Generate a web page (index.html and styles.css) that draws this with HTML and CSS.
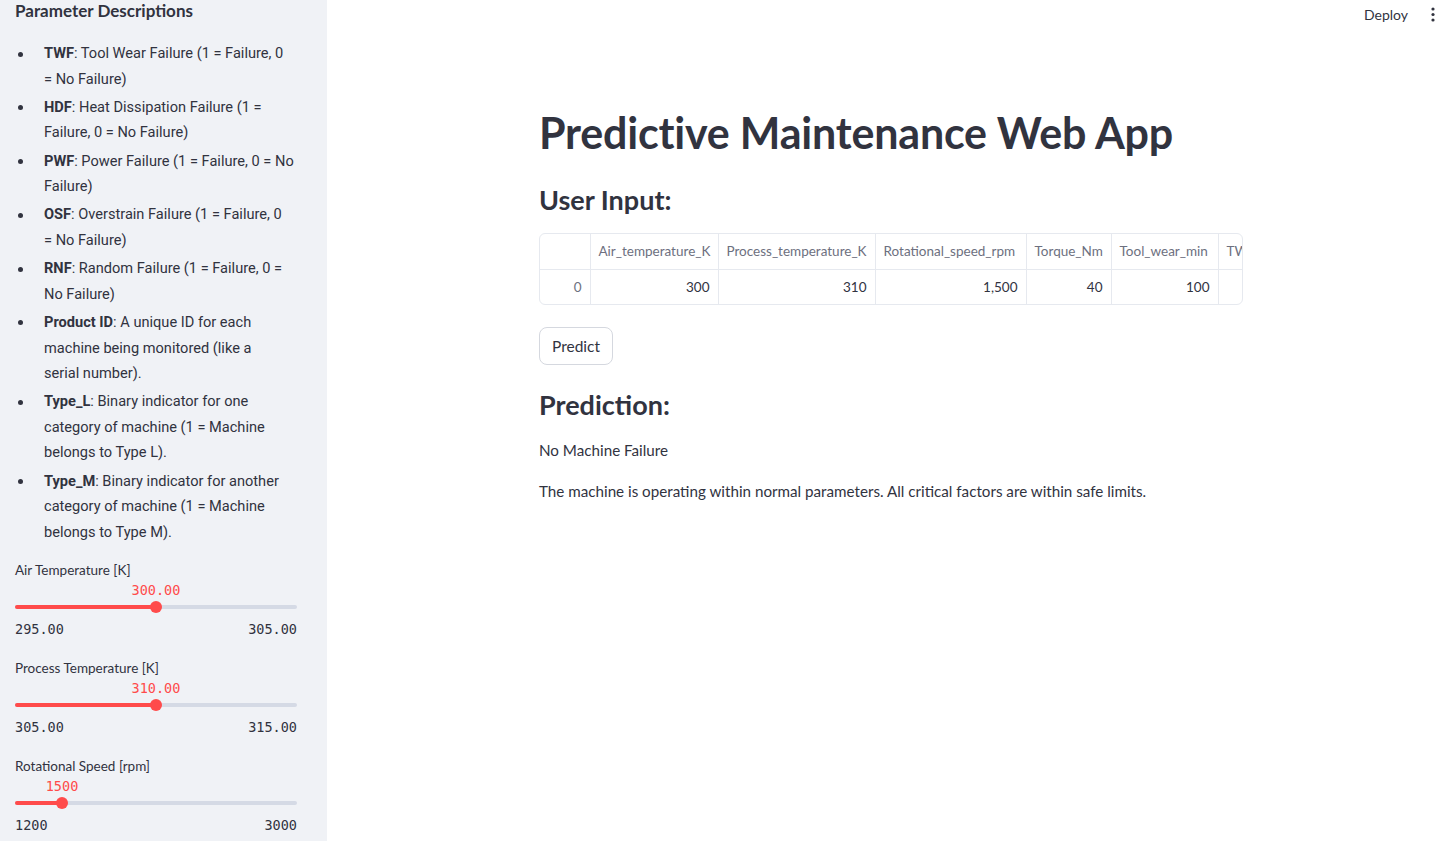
FILE: index.html
```html
<!DOCTYPE html>
<html lang="en">
<head>
<meta charset="utf-8">
<title>Predictive Maintenance Web App</title>
<link rel="stylesheet" href="styles.css">
</head>
<body>
<aside class="sidebar">
  <h3 class="side-title">Parameter Descriptions</h3>
  <ul class="desc-list">
    <li class="wrap-early"><strong>TWF</strong>: Tool Wear Failure (1 = Failure, 0 = No Failure)</li>
    <li><strong>HDF</strong>: Heat Dissipation Failure (1 = Failure, 0 = No Failure)</li>
    <li><strong>PWF</strong>: Power Failure (1 = Failure, 0 = No Failure)</li>
    <li class="wrap-early"><strong>OSF</strong>: Overstrain Failure (1 = Failure, 0 = No Failure)</li>
    <li><strong>RNF</strong>: Random Failure (1 = Failure, 0 = No Failure)</li>
    <li class="wrap-early"><strong>Product ID</strong>: A unique ID for each machine being monitored (like a serial number).</li>
    <li><strong>Type_L</strong>: Binary indicator for one category of machine (1 = Machine belongs to Type L).</li>
    <li><strong>Type_M</strong>: Binary indicator for another category of machine (1 = Machine belongs to Type M).</li>
  </ul>

  <div class="slider">
    <div class="slider-label">Air Temperature [K]</div>
    <div class="slider-body">
      <div class="slider-value-row"><span class="slider-value" style="left:50%">300.00</span></div>
      <div class="track"><div class="fill" style="width:50%"></div><div class="thumb" style="left:50%"></div></div>
      <div class="ticks"><span>295.00</span><span>305.00</span></div>
    </div>
  </div>

  <div class="slider">
    <div class="slider-label">Process Temperature [K]</div>
    <div class="slider-body">
      <div class="slider-value-row"><span class="slider-value" style="left:50%">310.00</span></div>
      <div class="track"><div class="fill" style="width:50%"></div><div class="thumb" style="left:50%"></div></div>
      <div class="ticks"><span>305.00</span><span>315.00</span></div>
    </div>
  </div>

  <div class="slider">
    <div class="slider-label">Rotational Speed [rpm]</div>
    <div class="slider-body">
      <div class="slider-value-row"><span class="slider-value" style="left:16.67%">1500</span></div>
      <div class="track"><div class="fill" style="width:16.67%"></div><div class="thumb" style="left:16.67%"></div></div>
      <div class="ticks"><span>1200</span><span>3000</span></div>
    </div>
  </div>
</aside>

<main class="main">
  <header class="topbar">
    <span class="deploy">Deploy</span>
    <span class="menu-btn">
      <svg width="4" height="15" viewBox="0 0 4 15"><circle cx="2" cy="2" r="1.6" fill="#31333f"/><circle cx="2" cy="7.5" r="1.6" fill="#31333f"/><circle cx="2" cy="13" r="1.6" fill="#31333f"/></svg>
    </span>
  </header>

  <section class="content">
    <h1 class="title">Predictive Maintenance Web App</h1>
    <h2 class="subhead">User Input:</h2>

    <div class="table-wrap">
      <table class="df">
        <thead>
          <tr>
            <th class="idx"></th>
            <th class="c1">Air_temperature_K</th>
            <th class="c2">Process_temperature_K</th>
            <th class="c3">Rotational_speed_rpm</th>
            <th class="c4">Torque_Nm</th>
            <th class="c5">Tool_wear_min</th>
            <th class="c6">TWF</th>
            <th class="c6">HDF</th>
            <th class="c6">PWF</th>
          </tr>
        </thead>
        <tbody>
          <tr>
            <td class="idx">0</td>
            <td>300</td>
            <td>310</td>
            <td>1,500</td>
            <td>40</td>
            <td>100</td>
            <td>0</td>
            <td>0</td>
            <td>0</td>
          </tr>
        </tbody>
      </table>
    </div>

    <button class="predict-btn" type="button">Predict</button>

    <h2 class="subhead pred">Prediction:</h2>
    <p class="text first">No Machine Failure</p>
    <p class="text">The machine is operating within normal parameters. All critical factors are within safe limits.</p>
  </section>
</main>
</body>
</html>
```

FILE: styles.css
```css
* { box-sizing: border-box; }

html, body {
  margin: 0;
  padding: 0;
  height: 100%;
}

body {
  display: flex;
  font-family: "Lato", "Open Sans", sans-serif;
  color: #31333f;
  background: #ffffff;
  overflow: hidden;
}

/* Sidebar */
.sidebar {
  width: 327px;
  flex: 0 0 327px;
  height: 100vh;
  background: #f0f2f6;
  padding: 0 30px 0 15px;
  overflow: hidden;
}

.side-title {
  margin: 0;
  font-size: 17px;
  font-weight: 700;
  line-height: 22px;
  color: #31333f;
}

.desc-list {
  list-style: none;
  margin: 19px 0 0 0;
  padding-left: 29px;
  font-family: "Roboto", "Lato", sans-serif;
  font-size: 14.6px;
  line-height: 25.6px;
}

.desc-list li {
  position: relative;
  margin-bottom: 2.6px;
}

.desc-list li.wrap-early {
  padding-right: 12px;
}

.desc-list li::before {
  content: "";
  position: absolute;
  left: -26px;
  top: 10.5px;
  width: 5px;
  height: 5px;
  border-radius: 50%;
  background: #31333f;
}

.desc-list strong {
  font-weight: 700;
}

.slider {
  margin-top: 0;
  margin-bottom: 22px;
}

.desc-list + .slider { margin-top: 16px; }

.slider-label {
  font-size: 13.5px;
  line-height: 18px;
  height: 18px;
}

.slider-value-row {
  position: relative;
  height: 20px;
}

.slider-value {
  position: absolute;
  top: 4px;
  transform: translateX(-50%);
  font-family: "DejaVu Sans Mono", "Liberation Mono", monospace;
  font-size: 13.5px;
  line-height: 14px;
  color: #ff4b4b;
}

.track {
  position: relative;
  height: 4px;
  border-radius: 2px;
  background: #d5dae5;
  margin-top: 6px;
}

.fill {
  height: 4px;
  background: #ff4b4b;
  border-radius: 2px;
}

.thumb {
  position: absolute;
  top: -4px;
  width: 12px;
  height: 12px;
  margin-left: -6px;
  border-radius: 50%;
  background: #ff4b4b;
}

.ticks {
  display: flex;
  justify-content: space-between;
  margin-top: 12px;
  font-family: "DejaVu Sans Mono", "Liberation Mono", monospace;
  font-size: 13.5px;
  line-height: 16px;
  color: #31333f;
}

/* Main */
.main {
  flex: 1;
  position: relative;
  height: 100vh;
  overflow: hidden;
}

.topbar {
  display: flex;
  justify-content: flex-end;
  align-items: center;
  height: 29px;
  padding: 0 10px 0 0;
  gap: 23px;
}

.deploy {
  font-size: 14px;
  color: #31333f;
}

.menu-btn {
  display: flex;
  align-items: center;
}

.content {
  width: 704px;
  margin-left: 212px;
  padding-top: 78px;
}

.title {
  margin: 0;
  font-size: 43px;
  font-weight: 700;
  line-height: 52px;
  letter-spacing: -0.2px;
  color: #31333f;
}

.subhead {
  margin: 22px 0 0 0;
  font-size: 27px;
  font-weight: 700;
  line-height: 38px;
  color: #31333f;
}

.table-wrap {
  margin-top: 14px;
  width: 704px;
  border: 1px solid #e6e9ef;
  border-radius: 6px;
  overflow: hidden;
}

.df {
  width: 858px;
  border-collapse: collapse;
  table-layout: fixed;
  font-size: 13.5px;
  white-space: nowrap;
}

.df th, .df td {
  border-right: 1px solid #e6e9ef;
  height: 35px;
  padding: 0 8px;
  overflow: hidden;
}

.df th {
  font-weight: 400;
  color: #6d7080;
  text-align: left;
  border-bottom: 1px solid #e6e9ef;
}

.df td {
  text-align: right;
  color: #31333f;
}

.df td.idx { color: #6d7080; }

.df .idx { width: 50px; }
.df .c1 { width: 128px; }
.df .c2 { width: 157px; }
.df .c3 { width: 151px; }
.df .c4 { width: 85px; }
.df .c5 { width: 107px; }
.df .c6 { width: 60px; }

.predict-btn {
  display: block;
  margin-top: 22px;
  height: 38px;
  padding: 0 12px;
  font-family: inherit;
  font-size: 15.5px;
  color: #31333f;
  background: #ffffff;
  border: 1px solid #d5d8df;
  border-radius: 8px;
}

.subhead.pred {
  margin-top: 21px;
}

.text {
  margin: 0;
  font-size: 15.2px;
  line-height: 25px;
}

.text.first { margin-top: 14px; }
.text + .text { margin-top: 16px; }
```
